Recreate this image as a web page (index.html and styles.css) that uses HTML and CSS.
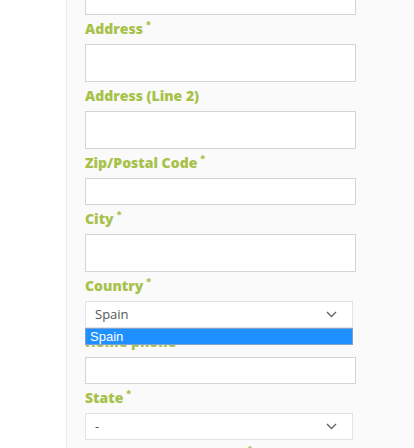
FILE: index.html
```html
<!DOCTYPE html>
<html lang="en">
<head>
    <meta charset="UTF-8">
    <meta name="viewport" content="width=device-width, initial-scale=1.0">
    <title>Your address</title>
    <link rel="stylesheet" href="styles.css">
</head>
<body>

    <div class="page">
        <div class="side"></div>

        <div class="panel">
            <form class="address-form">
                <input type="text" class="input tall">

                <label class="label">Address<sup>*</sup></label>
                <input type="text" class="input tall">

                <label class="label">Address (Line 2)</label>
                <input type="text" class="input tall">

                <label class="label">Zip/Postal Code<sup>*</sup></label>
                <input type="text" class="input">

                <label class="label">City<sup>*</sup></label>
                <input type="text" class="input tall">

                <label class="label">Country<sup>*</sup></label>
                <!-- Country select, open -->
                <div class="select open">
                    <span class="select-value">Spain</span>
                    <svg class="chevron" width="11" height="7" viewBox="0 0 11 7">
                        <polyline points="1,1 5.5,5.5 10,1" fill="none" stroke="#666" stroke-width="1.4"/>
                    </svg>
                    <ul class="options">
                        <li class="option selected">Spain</li>
                    </ul>
                </div>

                <label class="label">Home phone</label>
                <input type="text" class="input">

                <label class="label">State<sup>*</sup></label>
                <div class="select">
                    <span class="select-value">-</span>
                    <svg class="chevron" width="11" height="7" viewBox="0 0 11 7">
                        <polyline points="1,1 5.5,5.5 10,1" fill="none" stroke="#666" stroke-width="1.4"/>
                    </svg>
                </div>

                <label class="label">Identification number<sup>*</sup></label>
                <input type="text" class="input">
            </form>
        </div>
    </div>

</body>
</html>
```

FILE: styles.css
```css
body {
    margin: 0;
    font-family: "Open Sans", Arial, sans-serif;
    background-color: #ffffff;
    height: 448px;
    overflow: hidden;
}

.page {
    display: flex;
    height: 100%;
}

.side {
    width: 66px;
    flex-shrink: 0;
    background-color: #ffffff;
}

.panel {
    flex: 1;
    background-color: #fafafa;
    border-left: 1px solid #ececec;
    padding-left: 18px;
}

/* content is scrolled, first field cut off at the top */
.address-form {
    display: flex;
    flex-direction: column;
    margin-top: -23px;
    width: 271px;
}

.label {
    display: block;
    font-size: 14px;
    font-weight: 800;
    line-height: 19px;
    color: #a7c24b;
    margin: 4px 0 6px;
    position: relative;
}

.label sup {
    font-size: 9px;
    margin-left: 3px;
    vertical-align: 6px;
    line-height: 0;
}

.input {
    display: block;
    box-sizing: border-box;
    width: 271px;
    height: 27px;
    margin: 0;
    border: 1px solid #d4d4d4;
    background-color: #ffffff;
    outline: none;
}

.input.tall {
    height: 38px;
}

.select {
    position: relative;
    box-sizing: border-box;
    width: 268px;
    height: 27px;
    border: 1px solid #e3e3e3;
    background-color: #ffffff;
    display: flex;
    align-items: center;
    justify-content: space-between;
    padding: 0 15px 1px 9px;
    font-size: 13px;
    color: #555;
}

.select.open {
    z-index: 2;
}

.chevron {
    display: block;
}

/* open dropdown list */
.options {
    position: absolute;
    top: 26px;
    left: -1px;
    width: 268px;
    box-sizing: border-box;
    margin: 0;
    padding: 0;
    list-style: none;
    border: 1px solid #7d9fd4;
    background-color: #1e90ff;
}

.option {
    height: 15px;
    line-height: 15px;
    padding-left: 4px;
    font-family: "Liberation Sans", Arial, sans-serif;
    font-size: 13px;
    color: #ffffff;
}
```
